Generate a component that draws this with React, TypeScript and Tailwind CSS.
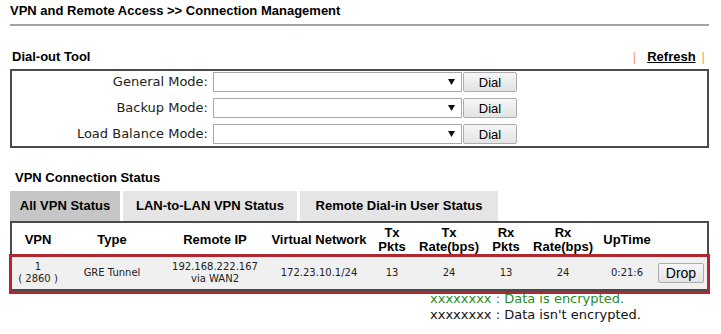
import React from "react";

const arial = { fontFamily: '"Liberation Sans", Arial, sans-serif' };
const verdana = { fontFamily: '"DejaVu Sans", Verdana, sans-serif' };

const modes = ["General Mode:", "Backup Mode:", "Load Balance Mode:"];

const cols = "grid grid-cols-[52px_96px_110px_98px_48px_66px_48px_66px_62px_49px]";

const headers: string[][] = [
  ["VPN"],
  ["Type"],
  ["Remote IP"],
  ["Virtual Network"],
  ["Tx", "Pkts"],
  ["Tx", "Rate(bps)"],
  ["Rx", "Pkts"],
  ["Rx", "Rate(bps)"],
  ["UpTime"],
  [""],
];

const Btn = ({ label, className = "" }: { label: string; className?: string }) => (
  <button
    style={arial}
    className={`h-[20px] rounded-[2px] border border-[#adadad] bg-gradient-to-b from-[#f6f6f6] to-[#e3e3e3] text-[13px] leading-none text-black ${className}`}
  >
    {label}
  </button>
);

const App = () => {
  return (
    <div className="w-[721px] h-[334px] bg-white text-black overflow-hidden">
      <div className="pl-[10px] pt-[3px]">
        <h1 style={arial} className="text-[13px] leading-[15px] font-bold">
          VPN and Remote Access &gt;&gt; Connection Management
        </h1>
        <div className="mt-[6px] h-[2px] w-[699px] bg-[#a3a3a3]" />

        <div className="mt-[21px] flex h-[20px] w-[699px] items-center justify-between pl-[2px] pr-[4px]">
          <span style={arial} className="text-[13px] font-bold">
            Dial-out Tool
          </span>
          <div style={arial} className="flex items-center text-[13px] font-bold">
            <span className="text-[#f39a5a] font-normal">|</span>
            <a href="#" className="ml-[11px] underline">
              Refresh
            </a>
            <span className="ml-[6px] text-[#f39a5a] font-normal">|</span>
          </div>
        </div>

        <div className="mt-[2px] w-[699px] border-2 border-[#4a4a4a] pt-px pb-[2px] flex flex-col gap-[6px]">
          {modes.map((m) => (
            <div key={m} className="flex items-center h-[20px]">
              <span style={verdana} className="w-[196px] text-right text-[13px] text-[#222]">
                {m}
              </span>
              <div className="ml-[5px] flex h-[20px] w-[249px] items-center justify-end border border-[#a9a9a9] bg-white pr-[6px]">
                <svg width="7" height="6" viewBox="0 0 7 6">
                  <polygon points="0,0 7,0 3.5,6" fill="#111" />
                </svg>
              </div>
              <Btn label="Dial" className="ml-px w-[54px]" />
            </div>
          ))}
        </div>

        <div style={arial} className="mt-[20px] flex h-[20px] items-center pl-[5px] text-[13px] font-bold">
          VPN Connection Status
        </div>

        <div style={arial} className="mt-[3px] flex h-[30px] gap-[3px] text-[13px] font-bold">
          <div className="flex w-[110px] items-center justify-center bg-[#c6c6c6]">All VPN Status</div>
          <div className="flex w-[174px] items-center justify-center bg-[#e5e5e5]">LAN-to-LAN VPN Status</div>
          <div className="flex w-[198px] items-center justify-center bg-[#e5e5e5]">Remote Dial-in User Status</div>
        </div>

        <div className="w-[699px] border-x-2 border-t-2 border-[#4a4a4a]">
          <div style={arial} className={`${cols} h-[34px] items-center text-[13px] font-bold leading-[14px]`}>
            {headers.map((h, i) => (
              <div key={i} className="flex flex-col items-center whitespace-nowrap">
                {h.map((t) => (
                  <span key={t}>{t}</span>
                ))}
              </div>
            ))}
          </div>
          <div
            style={verdana}
            className={`${cols} h-[34px] items-center border-b-2 border-[#4a4a4a] bg-[#f0f0f0] text-[10px] leading-[12px] text-[#222] outline-[3px] outline-solid outline-[#b3262f]`}
          >
            <div className="flex flex-col items-center">
              <span>1</span>
              <span>( 2860 )</span>
            </div>
            <div className="text-center">GRE Tunnel</div>
            <div className="flex flex-col items-center">
              <span>192.168.222.167</span>
              <span>via WAN2</span>
            </div>
            <div className="text-center">172.23.10.1/24</div>
            <div className="text-center">13</div>
            <div className="text-center">24</div>
            <div className="text-center">13</div>
            <div className="text-center">24</div>
            <div className="text-center">0:21:6</div>
            <div className="flex justify-start">
              <Btn label="Drop" className="w-[46px] text-[14px]" />
            </div>
          </div>
        </div>

        <div style={verdana} className="pl-[420px] text-[13px] leading-[16px]">
          <div className="text-[#2a8c2a]">xxxxxxxx : Data is encrypted.</div>
          <div className="text-[#111]">xxxxxxxx : Data isn't encrypted.</div>
        </div>
      </div>
    </div>
  );
};

export default App;
